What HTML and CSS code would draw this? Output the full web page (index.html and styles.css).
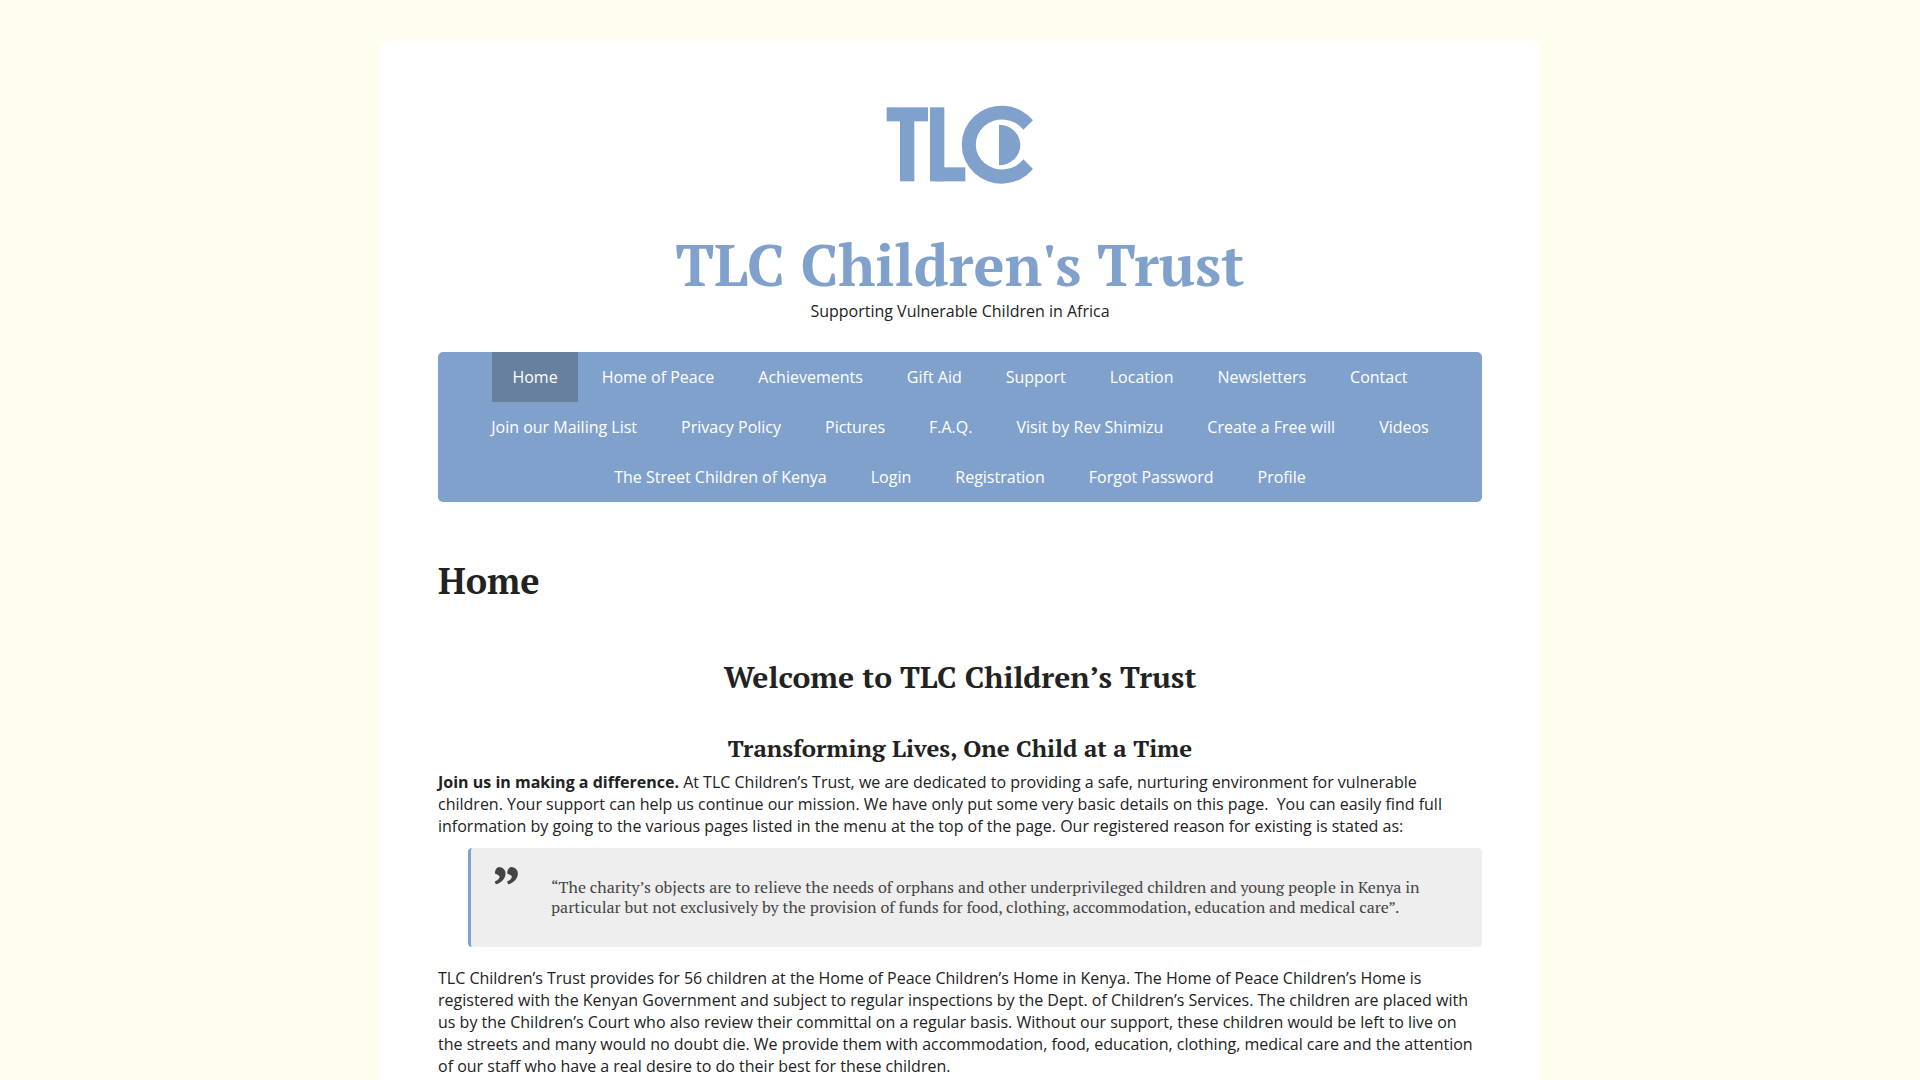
FILE: index.html
```html
<!DOCTYPE html>
<html lang="en">
<head>
<meta charset="utf-8">
<meta name="viewport" content="width=device-width, initial-scale=1">
<title>TLC Children's Trust</title>
<link rel="stylesheet" href="styles.css">
</head>
<body>
<div class="page">
  <header class="masthead">
    <a class="logo-link" href="#" aria-label="TLC Children's Trust">
      <svg class="logo" viewBox="0 0 450 240" aria-hidden="true">
        <rect x="5" y="10" width="124" height="42"/>
        <rect x="45" y="30" width="43" height="202"/>
        <rect x="135" y="10" width="43" height="222"/>
        <rect x="150" y="190" width="91" height="42"/>
        <path d="M444 49A120 117 0 1 0 444 195L415 166A79 75 0 1 1 415 77Z"/>
        <path d="M342 62A64 61 0 0 1 342 184Z"/>
      </svg>
    </a>
    <p class="site-title"><a href="#">TLC Children's Trust</a></p>
    <p class="tagline">Supporting Vulnerable Children in Africa</p>
  </header>
  <nav class="menu" aria-label="Main">
    <ul class="menu-list">
      <li><a class="current" href="#" aria-current="page">Home</a></li>
      <li><a href="#">Home of Peace</a></li>
      <li><a href="#">Achievements</a></li>
      <li><a href="#">Gift Aid</a></li>
      <li><a href="#">Support</a></li>
      <li><a href="#">Location</a></li>
      <li><a href="#">Newsletters</a></li>
      <li><a href="#">Contact</a></li>
      <li><a href="#">Join our Mailing List</a></li>
      <li><a href="#">Privacy Policy</a></li>
      <li><a href="#">Pictures</a></li>
      <li><a href="#">F.A.Q.</a></li>
      <li><a href="#">Visit by Rev Shimizu</a></li>
      <li><a href="#">Create a Free will</a></li>
      <li><a href="#">Videos</a></li>
      <li><a href="#">The Street Children of Kenya</a></li>
      <li><a href="#">Login</a></li>
      <li><a href="#">Registration</a></li>
      <li><a href="#">Forgot Password</a></li>
      <li><a href="#">Profile</a></li>
    </ul>
  </nav>
  <main class="content">
    <h1>Home</h1>
    <h2>Welcome to TLC Children’s Trust</h2>
    <h3>Transforming Lives, One Child at a Time</h3>
    <p><strong>Join us in making a difference.</strong> At TLC Children’s Trust, we are dedicated to providing a safe, nurturing environment for vulnerable children. Your support can help us continue our mission. We have only put some very basic details on this page.&nbsp; You can easily find full information by going to the various pages listed in the menu at the top of the page. Our registered reason for existing is stated as:</p>
    <blockquote class="quote">
      <p>“The charity’s objects are to relieve the needs of orphans and other underprivileged children and young people in Kenya in particular but not exclusively by the provision of funds for food, clothing, accommodation, education and medical care”.</p>
    </blockquote>
    <p>TLC Children’s Trust provides for 56 children at the Home of Peace Children’s Home in Kenya. The Home of Peace Children’s Home is registered with the Kenyan Government and subject to regular inspections by the Dept. of Children’s Services. The children are placed with us by the Children’s Court who also review their committal on a regular basis. Without our support, these children would be left to live on the streets and many would no doubt die. We provide them with accommodation, food, education, clothing, medical care and the attention of our staff who have a real desire to do their best for these children.</p>
  </main>
</div>
</body>
</html>
```

FILE: styles.css
```css
* {
  box-sizing: border-box;
}

body {
  margin: 0;
  padding: 40px 20px;
  background: #fffded;
  color: #222;
  font: 16px/22px "Open Sans", "Noto Sans", sans-serif;
}

h1,
h2,
h3,
p,
ul,
blockquote {
  margin: 0;
}

.page {
  max-width: 1160px;
  margin: 0 auto;
  padding: 58px;
  background: #fff;
  border-radius: 12px;
}

.masthead {
  display: flex;
  flex-direction: column;
  align-items: center;
  text-align: center;
}

.logo-link {
  display: block;
  padding: 6px 0 46px;
}

.logo {
  display: block;
  width: 150px;
  height: 80px;
  fill: #81a1cd;
}

.site-title,
h1,
h2,
h3,
.quote {
  font-family: "PT Serif", "Liberation Serif", serif;
}

.site-title {
  font-size: 58px;
  font-weight: 700;
  line-height: 70px;
}

.site-title a {
  color: #81a1cd;
  text-decoration: none;
}

.menu {
  margin-top: 30px;
  background: #81a1cd;
  border-radius: 5px;
}

.menu-list {
  display: flex;
  flex-wrap: wrap;
  justify-content: center;
  column-gap: 4px;
  padding: 0;
  list-style: none;
}

.menu a {
  display: block;
  padding: 0 20px;
  color: #fff;
  line-height: 50px;
  text-decoration: none;
}

.menu .current {
  background: #67809f;
}

.content {
  padding-top: 55px;
}

h1 {
  font-size: 36px;
  line-height: 48px;
}

h2 {
  margin-top: 52px;
  font-size: 30px;
  line-height: 40px;
  text-align: center;
}

h3 {
  margin-top: 35px;
  font-size: 24px;
  line-height: 32px;
  text-align: center;
}

.content > h3 + p {
  margin-top: 7px;
}

.quote {
  display: flex;
  margin: 11px 0 20px 30px;
  padding: 29px 48px 30px 20px;
  background: #eee;
  border-left: 3px solid #81a1cd;
  border-radius: 4px;
  color: #444;
  font-size: 16px;
  line-height: 20px;
}

.quote::before {
  content: "”";
  flex: 0 0 60px;
  height: 20px;
  font-size: 60px;
  font-weight: 700;
  line-height: 20px;
}
```
